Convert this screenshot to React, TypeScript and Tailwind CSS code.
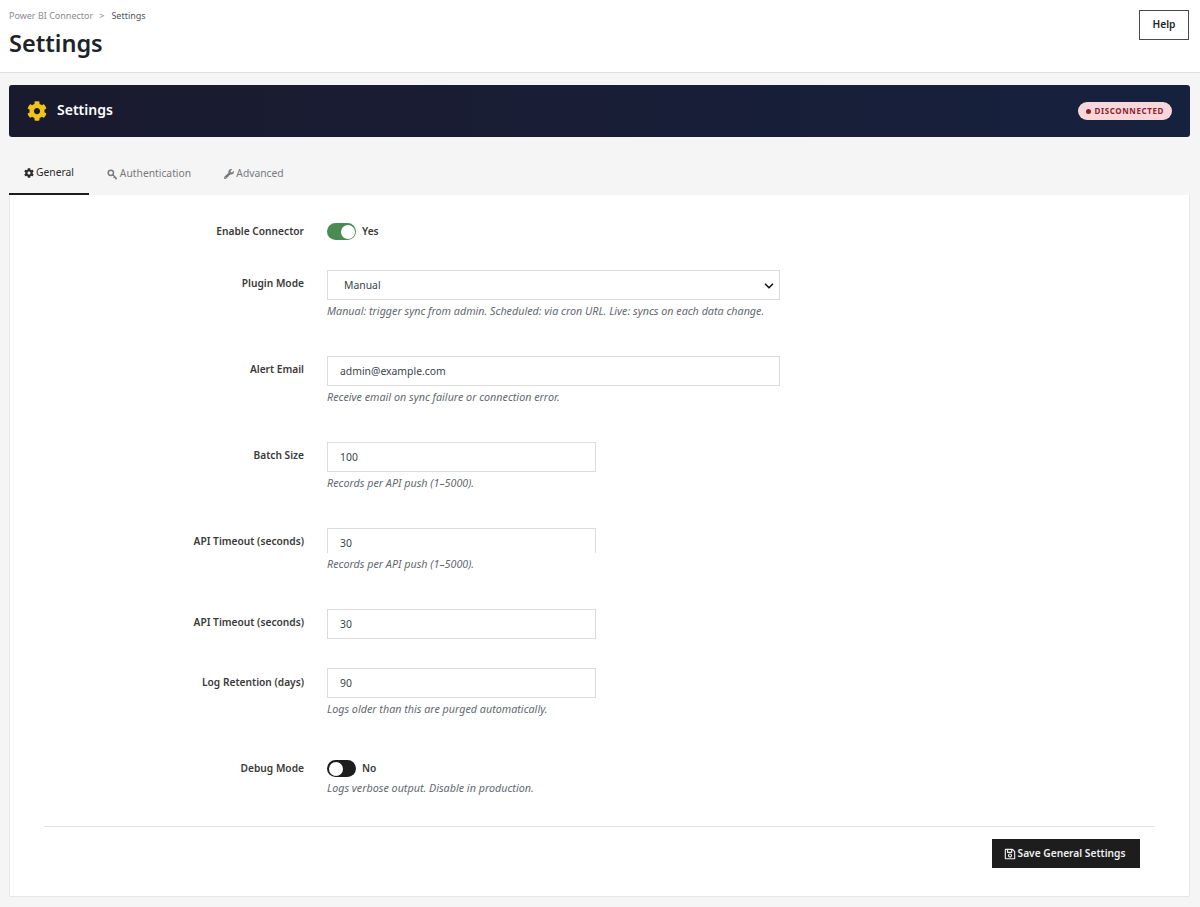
import { ChevronDown } from "lucide-react"
import { FaCog, FaRegSave, FaWrench } from "react-icons/fa"

const font = "font-['Noto_Sans','Liberation_Sans',sans-serif]"

function Help({ children }: { children: string }) {
  return <p className="mt-[4px] text-[10.75px] leading-[14px] italic text-[#646970]">{children}</p>
}

function Row({
  label,
  labelTop = "pt-[6px]",
  className = "",
  children,
}: {
  label: string
  labelTop?: string
  className?: string
  children: React.ReactNode
}) {
  return (
    <div className={`flex ${className}`}>
      <div className={`w-[294px] shrink-0 text-right text-[10.2px] leading-[14px] font-semibold text-[#3a3a3a] ${labelTop}`}>
        {label}
      </div>
      <div className="ml-[23px] flex-1">{children}</div>
    </div>
  )
}

function TextBox({ value, wide, clipped }: { value: string; wide?: boolean; clipped?: boolean }) {
  return (
    <div
      className={`flex items-center border border-[#dcdcde] bg-white pl-[12px] text-[10.4px] text-[#3c434a] ${
        wide ? "w-[453px]" : "w-[269px]"
      } ${clipped ? "h-[25px] border-b-0 pt-[6px]" : "h-[30px] pt-[1px]"}`}
    >
      {value}
    </div>
  )
}

function Toggle({ on }: { on: boolean }) {
  return (
    <div className="flex items-center">
      <div
        className={`flex h-[17px] w-[29px] items-center rounded-full px-[1.5px] ${
          on ? "justify-end bg-[#4a8b52]" : "justify-start bg-[#1d1d1d]"
        }`}
      >
        <div className="h-[14px] w-[14px] rounded-full bg-white" />
      </div>
      <span className="ml-[6px] text-[10.2px] font-semibold text-[#3a3a3a]">{on ? "Yes" : "No"}</span>
    </div>
  )
}

function KeyIcon() {
  return (
    <svg viewBox="0 0 12 12" className="h-[11px] w-[11px]" fill="none" stroke="currentColor">
      <circle cx="4.2" cy="4.2" r="2.9" strokeWidth="1.6" />
      <path d="M6.3 6.3 10.6 10.6M8.4 8.4 7.2 9.6M10.2 10.2 9 11.2" strokeWidth="1.5" />
    </svg>
  )
}

export default function App() {
  return (
    <div className={`min-h-[907px] bg-[#f5f5f5] ${font}`}>
      <header className="flex h-[73px] items-start justify-between border-b border-[#dedede] bg-white pr-[11px] pl-[9px]">
        <div>
          <div className="mt-[10px] flex text-[9px] leading-[12px] text-[#8a8c8f]">
            <span>Power BI Connector</span>
            <span className="mx-[6px]">&gt;</span>
            <span className="ml-[1px] text-[#50555a]">Settings</span>
          </div>
          <h1 className="mt-[5px] text-[23.5px] leading-[32px] font-semibold text-[#1d2327]">Settings</h1>
        </div>
        <button className="mt-[10px] h-[30px] w-[50px] border border-[#4a4a4a] bg-white text-[10.2px] font-semibold text-[#1d2327]">
          Help
        </button>
      </header>

      <main className="pt-[12px] pr-[10px] pl-[9px]">
        <div className="flex h-[52px] items-center justify-between rounded-[3px] bg-gradient-to-r from-[#1a1a2e] to-[#16213e] px-[18px]">
          <div className="flex items-center gap-[10px]">
            <FaCog className="text-[20px] text-[#f0c419]" />
            <span className="pb-[3px] text-[14px] font-semibold text-white">Settings</span>
          </div>
          <div className="flex h-[18px] items-center gap-[4px] rounded-full bg-[#f8d7da] px-[8px] text-[8px] font-bold tracking-[0.6px] text-[#8c2230]">
            <span className="h-[5px] w-[5px] rounded-full bg-[#8c1c28]" />
            DISCONNECTED
          </div>
        </div>

        <nav className="mt-[18px] flex h-[40px] text-[10.3px]">
          <div className="flex w-[80px] items-center justify-center gap-[2px] border-b-2 border-[#1d1d1d] pb-[2px] text-[#2c2c2c]">
            <FaCog className="text-[10px]" />
            General
          </div>
          <div className="ml-[1px] flex w-[118px] items-center justify-center gap-[2px] pb-[2px] text-[#77797c]">
            <KeyIcon />
            Authentication
          </div>
          <div className="ml-[2px] flex w-[88px] items-center justify-center gap-[2px] pb-[2px] text-[#77797c]">
            <FaWrench className="text-[10px]" />
            Advanced
          </div>
        </nav>

        <section className="h-[702px] rounded-b-[2px] border border-t-0 border-[#e6e6e6] bg-white">
          <Row label="Enable Connector" labelTop="pt-[29px]" className="h-[75px]">
            <div className="pt-[28px]">
              <Toggle on />
            </div>
          </Row>
          <Row label="Plugin Mode" className="h-[86px]">
            <div className="relative flex h-[30px] w-[453px] items-center border border-[#dcdcde] bg-white pt-[1px] pl-[16px] text-[10.4px] text-[#3c434a]">
              Manual
              <ChevronDown className="absolute right-[3px] h-[14px] w-[14px] text-[#1d1d1d]" strokeWidth={3} />
            </div>
            <Help>Manual: trigger sync from admin. Scheduled: via cron URL. Live: syncs on each data change.</Help>
          </Row>
          <Row label="Alert Email" className="h-[86px]">
            <TextBox value="admin@example.com" wide />
            <Help>Receive email on sync failure or connection error.</Help>
          </Row>
          <Row label="Batch Size" className="h-[86px]">
            <TextBox value="100" />
            <Help>Records per API push (1–5000).</Help>
          </Row>
          <Row label="API Timeout (seconds)" className="h-[81px]">
            <TextBox value="30" clipped />
            <Help>Records per API push (1–5000).</Help>
          </Row>
          <Row label="API Timeout (seconds)" className="h-[59px]">
            <TextBox value="30" />
          </Row>
          <Row label="Log Retention (days)" labelTop="pt-[7px]" className="h-[91px]">
            <TextBox value="90" />
            <Help>Logs older than this are purged automatically.</Help>
          </Row>
          <Row label="Debug Mode" labelTop="pt-[2px]" className="h-[67px]">
            <div className="pt-[1px]">
              <Toggle on={false} />
            </div>
            <Help>Logs verbose output. Disable in production.</Help>
          </Row>
          <div className="mx-[34px] border-t border-[#e2e2e2]" />
          <div className="mt-[12px] flex justify-end pr-[49px]">
            <button className="flex h-[29px] w-[148px] items-center justify-center gap-[2px] bg-[#1d1d1d] pr-[3px] text-[10.2px] font-semibold text-[#f0f0f0]">
              <FaRegSave className="text-[12px]" />
              Save General Settings
            </button>
          </div>
        </section>
      </main>
    </div>
  )
}
